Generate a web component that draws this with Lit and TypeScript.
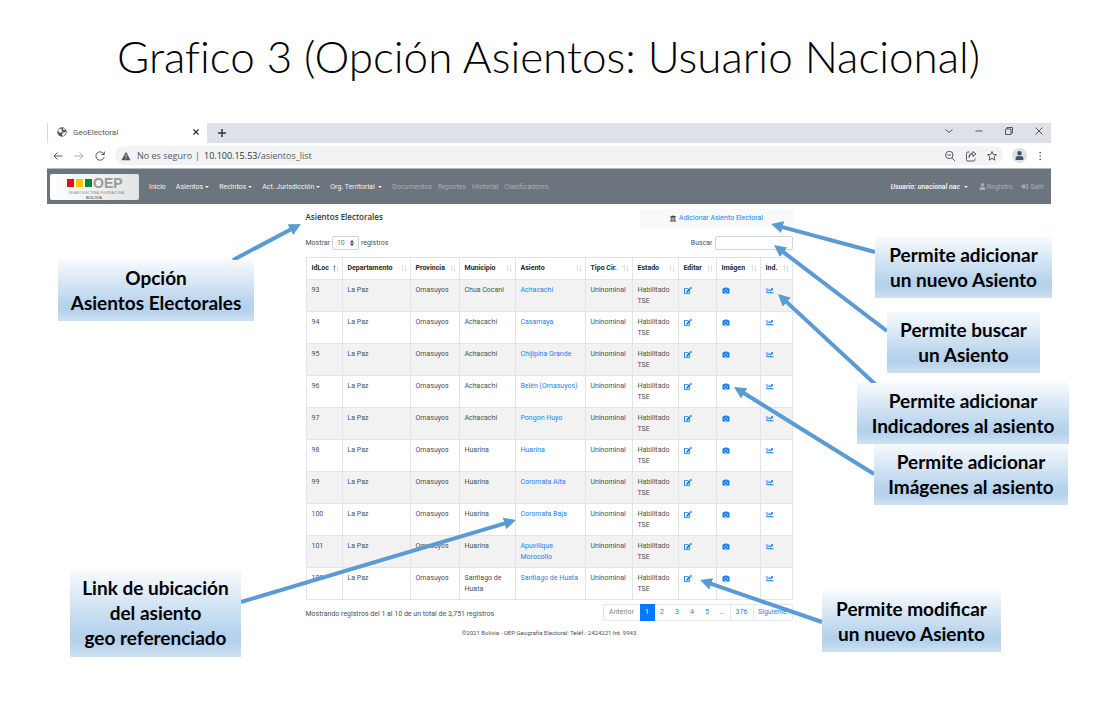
import { LitElement, html, svg, css } from "lit";
import { customElement } from "lit/decorators.js";

const COLUMNS = ["IdLoc", "Departamento", "Provincia", "Municipio", "Asiento", "Tipo Cir.", "Estado", "Editar", "Imágen", "Ind."];

const SEATS: [number, string, string][] = [
  [93, "Chua Cocani", "Achacachi"],
  [94, "Achacachi", "Casamaya"],
  [95, "Achacachi", "Chijipina Grande"],
  [96, "Achacachi", "Belén (Omasuyos)"],
  [97, "Achacachi", "Pongon Huyo"],
  [98, "Huarina", "Huarina"],
  [99, "Huarina", "Coromata Alta"],
  [100, "Huarina", "Coromata Baja"],
  [101, "Huarina", "Apuvillque Morocollo"],
  [102, "Santiago de Huata", "Santiago de Huata"],
];

/* Tail x/y and tip x/y of every arrow on the slide. */
const ARROWS = [
  [233, 260, 301, 224],
  [875, 252, 771, 224],
  [887, 331, 774, 245],
  [875, 384, 778, 294],
  [874, 474, 734, 387],
  [241, 602, 516, 520],
  [822, 622, 700, 580],
];

const NOTES: [string, string, string][] = [
  ["n-list", "Opción", "Asientos Electorales"],
  ["n-add", "Permite adicionar", "un nuevo Asiento"],
  ["n-search", "Permite buscar", "un Asiento"],
  ["n-ind", "Permite adicionar", "Indicadores al asiento"],
  ["n-img", "Permite adicionar", "Imágenes al asiento"],
  ["n-edit", "Permite modificar", "un nuevo Asiento"],
];

const fa = (w: number, d: string, cls = "ico") => html`<svg class=${cls} viewBox="0 0 ${w} 512" aria-hidden="true"><path fill="currentColor" d=${d} /></svg>`;
const line = (d: string, cls = "chrome-ico") => html`<svg class=${cls} viewBox="0 0 12 12" fill="none" stroke="currentColor" aria-hidden="true"><path d=${d} /></svg>`;

const EDIT = "M402 84l90 90c4 4 4 10 0 14L274 406l-93 10c-12 2-23-9-21-21l10-93L388 84c4-4 10-4 14 0zm163-23l-49-49c-15-15-40-15-55 0l-35 35c-4 4-4 10 0 14l90 90c4 4 10 4 14 0l35-35c15-15 15-40 0-55zM384 346v102H64V128h230c3 0 6-1 9-4l40-40c8-7 2-20-8-20H48C22 64 0 86 0 112v352c0 27 22 48 48 48h352c27 0 48-21 48-48V306c0-10-13-16-20-8l-40 40c-3 2-4 5-4 8z";
const CAMERA = "M512 144v288c0 27-22 48-48 48H48c-26 0-48-21-48-48V144c0-26 22-48 48-48h88l12-33c7-19 25-31 45-31h126c20 0 38 12 45 31l12 33h88c26 0 48 22 48 48zM376 288c0-66-54-120-120-120s-120 54-120 120 54 120 120 120 120-54 120-120zm-32 0c0 49-39 88-88 88s-88-39-88-88 39-88 88-88 88 39 88 88z";
const CHART = "M496 384H64V80c0-9-7-16-16-16H16C7 64 0 71 0 80v336c0 18 14 32 32 32h464c9 0 16-7 16-16v-32c0-9-7-16-16-16zM464 96H346c-22 0-32 26-17 41l32 32-73 73-73-73c-13-12-33-12-46 0l-64 64c-6 6-6 16 0 22l23 23c6 6 16 6 22 0l42-41 73 73c13 12 33 12 46 0l96-96 32 32c15 15 41 5 41-17V112c0-9-7-16-16-16z";
const BANK = "M496 128v16a8 8 0 0 1-8 8h-24v12c0 7-5 12-12 12H60c-7 0-12-5-12-12v-12H24a8 8 0 0 1-8-8v-16a8 8 0 0 1 5-7l232-88a8 8 0 0 1 6 0l232 88a8 8 0 0 1 5 7zm-24 304H40c-13 0-24 11-24 24v16a8 8 0 0 0 8 8h464a8 8 0 0 0 8-8v-16c0-13-11-24-24-24zM96 192v192H60c-7 0-12 5-12 12v20h416v-20c0-7-5-12-12-12h-36V192h-64v192h-64V192h-64v192h-64V192H96z";
const USER = "M224 256a128 128 0 1 0 0-256 128 128 0 0 0 0 256zm90 32h-17a174 174 0 0 1-146 0h-17C60 288 0 348 0 422v42c0 27 21 48 48 48h352c27 0 48-21 48-48v-42c0-74-60-134-134-134z";
const SIGN_IN = "M416 448h-84c-7 0-12-5-12-12v-40c0-7 5-12 12-12h84c18 0 32-14 32-32V160c0-18-14-32-32-32h-84c-7 0-12-5-12-12V76c0-7 5-12 12-12h84c53 0 96 43 96 96v192c0 53-43 96-96 96zm-47-209L201 71c-15-15-41-4-41 17v96H24c-13 0-24 11-24 24v96c0 13 11 24 24 24h136v96c0 22 26 32 41 17l168-168c9-9 9-25 0-34z";

@customElement("browser-chrome")
class BrowserChrome extends LitElement {
  static styles = css`
    * { box-sizing: border-box; }
    :host { display: block; color: #54585d; font: 9px "Open Sans", sans-serif; }
    button { border: 0; padding: 0; background: none; color: inherit; display: flex; font: inherit; }
    svg { display: block; width: 12px; height: 12px; }
    .tabs { display: flex; align-items: center; height: 20px; background: #dee1e6; }
    .tab { display: flex; align-items: center; gap: 6px; width: 160px; height: 20px; padding: 0 5px 2px 9px; background: #fff; border-left: 1px solid #d5d8dc; font: 8px Roboto, sans-serif; }
    .tab .title { flex: 1; }
    .tab .globe { width: 10px; height: 10px; }
    .plus { margin-left: 9px; }
    .window { display: flex; gap: 18px; margin-left: auto; padding-right: 6px; align-self: flex-start; padding-top: 2px; }
    .bar { display: flex; align-items: center; height: 25px; padding: 0 5px 0 5px; gap: 9px; }
    .address { display: flex; align-items: center; flex: 1; height: 19px; padding: 0 5px 0 6px; border-radius: 10px; background: #f1f3f4; gap: 9px; }
    .label { display: flex; align-items: center; gap: 6px; }
    .label svg { width: 10px; height: 10px; }
    .host { color: #2f3337; }
    .text { flex: 1; margin-left: -6px; display: flex; gap: 4px; }
    .avatar { width: 15px; height: 15px; border-radius: 8px; background: #dce1e9; align-items: center; justify-content: center; color: #45506a; }
    .avatar svg { width: 9px; height: 9px; }
    .dots { width: 10px; }
  `;
  render() {
    return html`
      <div class="tabs">
        <div class="tab">
          <svg class="globe" viewBox="0 0 12 12"><circle cx="6" cy="6" r="5.6" fill="#50555b" /><path d="M1 4l2-2 3 0-1 2 2 1-2 2H3zM7 7l3-1 1 1-2 3-2 1-1-2zM8 1l2 2-1 1-2-1z" fill="#f2f3f4" /></svg>
          <span class="title">GeoElectoral</span>
          <button aria-label="Cerrar pestaña"><svg viewBox="0 0 12 12" stroke="#33373b" stroke-width="1.300"><path d="M3.500 3.500l5 5M8.500 3.500l-5 5" /></svg></button>
        </div>
        <button class="plus" aria-label="Nueva pestaña"><svg viewBox="0 0 12 12" stroke="#33373b" stroke-width="1.500"><path d="M6 2v8M2 6h8" /></svg></button>
        <div class="window">
          <button aria-label="Buscar pestañas">${line("M2.500 4.500l3.500 3 3.500-3")}</button>
          <button aria-label="Minimizar">${line("M2.500 6h7")}</button>
          <button aria-label="Restaurar">${line("M2.500 4h5.500v5.500h-5.500zM4 4V2.500h5.500V8H8")}</button>
          <button aria-label="Cerrar">${line("M2.500 2.500l7 7M9.500 2.500l-7 7")}</button>
        </div>
      </div>
      <div class="bar">
        <button aria-label="Atrás">${line("M10.500 6h-8.500M5.500 2.500L2 6l3.500 3.500")}</button>
        <button aria-label="Adelante"><svg viewBox="0 0 12 12" fill="none" stroke="#a9adb2"><path d="M1.500 6h8.500M6.500 2.500L10 6 6.500 9.500" /></svg></button>
        <button aria-label="Recargar">${line("M9.800 4A4.200 4.200 0 1 0 10.200 7M10.300 1.500V4.500H7.300")}</button>
        <div class="address">
          <span class="label"><svg viewBox="0 0 12 12"><path d="M6 1l5.500 10h-11z" fill="#50555b" /><path d="M6 4.500v3M6 8.500v1.200" stroke="#fff" /></svg>No es seguro</span>
          <span class="text"><span>|</span><span><span class="host">10.100.15.53</span>/asientos_list</span></span>
          <button aria-label="Zoom">${line("M9 5A3.700 3.700 0 1 1 1.600 5 3.700 3.700 0 0 1 9 5M8 8l3 3M3.500 5h3.500")}</button>
          <button aria-label="Compartir">${line("M4.500 2H3Q1.500 2 1.500 3.500v6Q1.500 11 3 11h5.500Q10 11 10 9.500V8.500M4 7.500C4 5 6 4.500 8 4.500V6.500L11 4 8 1.500V3C5 3 4 5 4 7.500")}</button>
          <button aria-label="Favorito">${line("M6 1.500l1.300 3 3.200.3-2.400 2.100.7 3.200L6 8.400l-2.800 1.700.7-3.200L1.500 4.800l3.200-.3z")}</button>
        </div>
        <button class="avatar" aria-label="Perfil">${fa(448, USER)}</button>
        <button class="dots" aria-label="Menú"><svg viewBox="0 0 12 12" fill="currentColor"><circle cx="5" cy="2" r="1" /><circle cx="5" cy="6" r="1" /><circle cx="5" cy="10" r="1" /></svg></button>
      </div>`;
  }
}

@customElement("oep-navbar")
class OepNavbar extends LitElement {
  static styles = css`
    :host { display: flex; align-items: center; height: 36px; padding: 0 7px 0 3px; background: #6c757d; border-top: 1px solid #b6babe; box-sizing: border-box; font: 7px Roboto, sans-serif; }
    a { color: #f3f4f5; text-decoration: none; white-space: nowrap; display: flex; align-items: center; gap: 2px; }
    .brand { display: block; width: 89px; height: 26px; }
    .brand svg { display: block; width: 89px; height: 26px; }
    nav { display: flex; gap: 10px; margin-left: 10px; flex: 1; }
    .off { color: #a9aeb3; }
    .off.group { display: flex; gap: 6px; }
    .caret::after { content: ""; border: 2px solid transparent; border-top-color: currentColor; border-bottom: 0; }
    .user { font-style: italic; font-weight: 600; }
    .session { display: flex; gap: 8px; }
    .ico { width: 7px; height: 7px; }
    .session a:first-child { margin-right: 3px; }
    .session .off { gap: 1px; }
  `;
  render() {
    return html`
      <a class="brand" href="#" aria-label="OEP Bolivia">
        <svg viewBox="0 0 89 26">
          <defs><linearGradient id="g" x2="1" y2="0"><stop offset="0" stop-color="#fff" /><stop offset="1" stop-color="#e2e3e4" /></linearGradient></defs>
          <rect width="89" height="26" rx="2" fill="url(#g)" />
          <rect x="17" y="5" width="7" height="8" fill="#e2101f" /><rect x="26" y="5" width="7" height="8" fill="#fbc707" /><rect x="35" y="5" width="7" height="8" fill="#07853f" />
          <text x="43" y="14" font-family="Liberation Sans" font-weight="700" font-size="14" fill="#989a9b">OEP</text>
          <text x="18" y="20" font-family="Liberation Sans" font-size="3" fill="#85888a">ÓRGANO ELECTORAL PLURINACIONAL</text>
          <text x="36" y="25" font-family="Liberation Sans" font-weight="700" font-size="4" fill="#77797b">BOLIVIA</text>
        </svg>
      </a>
      <nav>
        <a href="#">Inicio</a><a class="caret" href="#">Asientos</a><a class="caret" href="#">Recintos</a><a class="caret" href="#">Act. Jurisdicción</a><a class="caret" href="#">Org. Territorial&nbsp;</a>
        <div class="off group"><a class="off" href="#">Documentos</a><a class="off" href="#">Reportes</a><a class="off" href="#">Historial</a><a class="off" href="#">Clasificadores</a></div>
      </nav>
      <div class="session">
        <a class="user caret" href="#">Usuario: unacional nac&nbsp;</a>
        <a class="off" href="#">${fa(448, USER)}Registro</a>
        <a class="off" href="#">${fa(512, SIGN_IN)}&nbsp;Salir</a>
      </div>`;
  }
}

@customElement("seat-list")
class SeatList extends LitElement {
  static styles = css`
    * { box-sizing: border-box; }
    :host { display: block; width: 487px; margin: 0 auto; padding-top: 5px; color: #4b5055; font: 7px/11px Roboto, sans-serif; }
    a { color: #2480f5; text-decoration: none; }
    .head, .filters, .foot { display: flex; justify-content: space-between; }
    h2 { margin: 0; font: 600 8px/16px "Open Sans", sans-serif; color: #33383d; }
    .add { display: flex; align-items: center; justify-content: center; gap: 2px; width: 153px; height: 18px; background: #f8f9fa; }
    .add svg { color: #343a40; }
    .filters { align-items: center; margin: 9px 0 7px; height: 14px; }
    .filters label { display: flex; align-items: center; gap: 2px; }
    .pick { display: flex; position: relative; }
    select { appearance: none; width: 27px; height: 14px; padding: 0 4px; border: 1px solid #ced4da; border-radius: 2px; background: #fff; color: #6b7278; font: inherit; }
    .pick svg { position: absolute; right: 5px; top: 4px; width: 4px; height: 6px; pointer-events: none; }
    input { width: 78px; height: 14px; padding: 0 4px; border: 1px solid #ced4da; border-radius: 2px; font: inherit; }
    table { width: 100%; border-collapse: collapse; table-layout: fixed; }
    th, td { border: 1px solid #e1e5e9; text-align: left; vertical-align: top; }
    th { height: 22px; padding: 0; color: #24292e; vertical-align: middle; }
    th button { display: flex; align-items: center; justify-content: space-between; width: 100%; padding: 0 3px 0 5px; border: 0; background: none; color: inherit; font: 700 7px/11px Roboto, sans-serif; white-space: nowrap; }
    .sort { width: 6px; height: 7px; color: #d3d6d9; }
    .sort .on { color: #6d7277; }
    td { height: 32px; padding: 5px 5px 4px; }
    tbody tr:nth-child(odd) { background: #f2f2f2; }
    .ico { display: block; height: 7px; width: 8px; }
    td .ico { margin-top: 2px; color: #0d7bfb; }
    .c0 { width: 36px; } .c1 { width: 68px; } .c2 { width: 49px; } .c3 { width: 56px; } .c4 { width: 70px; }
    .c5 { width: 47px; } .c6 { width: 46px; } .c7 { width: 38px; } .c8 { width: 44px; } .c9 { width: 32px; }
    .foot { margin-top: 4px; }
    .foot p { margin: 5px 0 0; }
    .pages { display: flex; height: 17px; border: 1px solid #e3e7ea; border-radius: 2px; }
    .pages a { width: 15px; line-height: 15px; text-align: center; }
    .pages .prev { width: 36px; color: #7c8389; }
    .pages .next { width: 39px; border-left: 1px solid #e3e7ea; }
    .pages .last { width: 23px; border-left: 1px solid #e3e7ea; }
    .pages .now { margin: -1px 0; line-height: 17px; background: #007bff; color: #fff; }
    footer { margin-top: 6px; text-align: center; font-size: 6px; line-height: 11px; }
  `;
  render() {
    return html`
      <div class="head"><h2>Asientos Electorales</h2><div class="add">${fa(512, BANK)}<a href="#">Adicionar Asiento Electoral</a></div></div>
      <div class="filters">
        <label>Mostrar <span class="pick"><select><option>10</option></select><svg viewBox="0 0 4 6"><path d="M0 2.500L2 0l2 2.500zM0 3.500L2 6l2-2.500z" fill="#343a40" /></svg></span> registros</label>
        <label>Buscar <input type="search" /></label>
      </div>
      <table>
        <thead><tr>${COLUMNS.map((c, i) => html`<th class="c${i}"><button>${c}<svg class="sort" viewBox="0 0 6 7" fill="none" stroke="currentColor" stroke-width=".7"><path class=${i ? "" : "on"} stroke="currentColor" d="M1.500 6.500V.7M.3 2l1.200-1.300L2.700 2" /><path d="M4.500.5v5.800M3.300 5l1.200 1.300L5.700 5" /></svg></button></th>`)}</tr></thead>
        <tbody>${SEATS.map(([id, town, seat]) => html`<tr>
          <td>${id}</td><td>La Paz</td><td>Omasuyos</td><td>${town}</td><td><a href="#">${seat}</a></td><td>Uninominal</td><td>Habilitado TSE</td>
          <td><a href="#" aria-label="Editar">${fa(576, EDIT)}</a></td><td><a href="#" aria-label="Imágen">${fa(512, CAMERA)}</a></td><td><a href="#" aria-label="Indicadores">${fa(512, CHART)}</a></td></tr>`)}</tbody>
      </table>
      <div class="foot">
        <p>Mostrando registros del 1 al 10 de un total de 3,751 registros</p>
        <div class="pages"><a class="prev" href="#">Anterior</a><a class="now" href="#">1</a><a href="#">2</a><a href="#">3</a><a href="#">4</a><a href="#">5</a><a href="#">...</a><a class="last" href="#">376</a><a class="next" href="#">Siguiente</a></div>
      </div>
      <footer>©2021 Bolivia - OEP Geografía Electoral: Teléf.: 2424221 Int. 9943</footer>`;
  }
}

@customElement("app-root")
class AppRoot extends LitElement {
  static styles = css`
    :host { display: block; position: relative; min-height: 100vh; background: #fff; overflow: hidden; }
    h1 { margin: 0; padding: 26px 6px 37px 0; text-align: center; font: 300 44px/60px Lato, sans-serif; font-variant-ligatures: none; color: #000; }
    .shot { margin: 0 52px 0 47px; }
    .arrows { position: absolute; left: 0; top: 0; width: 1103px; height: 702px; pointer-events: none; }
    .note { position: absolute; box-sizing: border-box; display: flex; flex-direction: column; justify-content: center; height: 61px; padding-bottom: 2px; text-align: center; font: 700 19px/25px Lato, sans-serif; color: #000; white-space: nowrap; background: linear-gradient(#f7fafd, #b5d2ec 74%, #b5d2ec 83%, #cee1f2); }
    .n-list { left: 58px; top: 260px; width: 196px; }
    .n-add { left: 875px; top: 237px; width: 177px; }
    .n-search { left: 887px; top: 312px; width: 153px; }
    .n-ind { left: 857px; top: 383px; width: 212px; }
    .n-img { left: 874px; top: 444px; width: 194px; }
    .n-edit { left: 822px; top: 591px; width: 179px; }
    .n-link { left: 70px; top: 570px; width: 171px; height: 87px; }
  `;
  render() {
    return html`
      <h1>Grafico 3 (Opción Asientos: Usuario Nacional)</h1>
      <main class="shot"><browser-chrome></browser-chrome><oep-navbar></oep-navbar><seat-list></seat-list></main>
      <svg class="arrows" viewBox="0 0 1103 702" aria-hidden="true">
        <defs><marker id="tip" viewBox="0 0 12 12" refX="12" refY="6" markerWidth="12" markerHeight="12" markerUnits="userSpaceOnUse" orient="auto"><path d="M0 0l12 6-12 6z" fill="#5b9bd5" /></marker></defs>
        ${ARROWS.map(([x1, y1, x2, y2]) => {
          const len = Math.hypot(x2 - x1, y2 - y1);
          const bx = x2 - ((x2 - x1) / len) * 9;
          const by = y2 - ((y2 - y1) / len) * 9;
          return svg`<path d="M${x1} ${y1}L${bx} ${by}" stroke="#5b9bd5" stroke-width="4" /><path d="M${x1} ${y1}L${x2} ${y2}" stroke="none" fill="none" marker-end="url(#tip)" />`;
        })}
      </svg>
      ${NOTES.map(([cls, a, b]) => html`<div class="note ${cls}"><span>${a}</span><span>${b}</span></div>`)}
      <div class="note n-link"><span>Link de ubicación</span><span>del asiento</span><span>geo referenciado</span></div>`;
  }
}
